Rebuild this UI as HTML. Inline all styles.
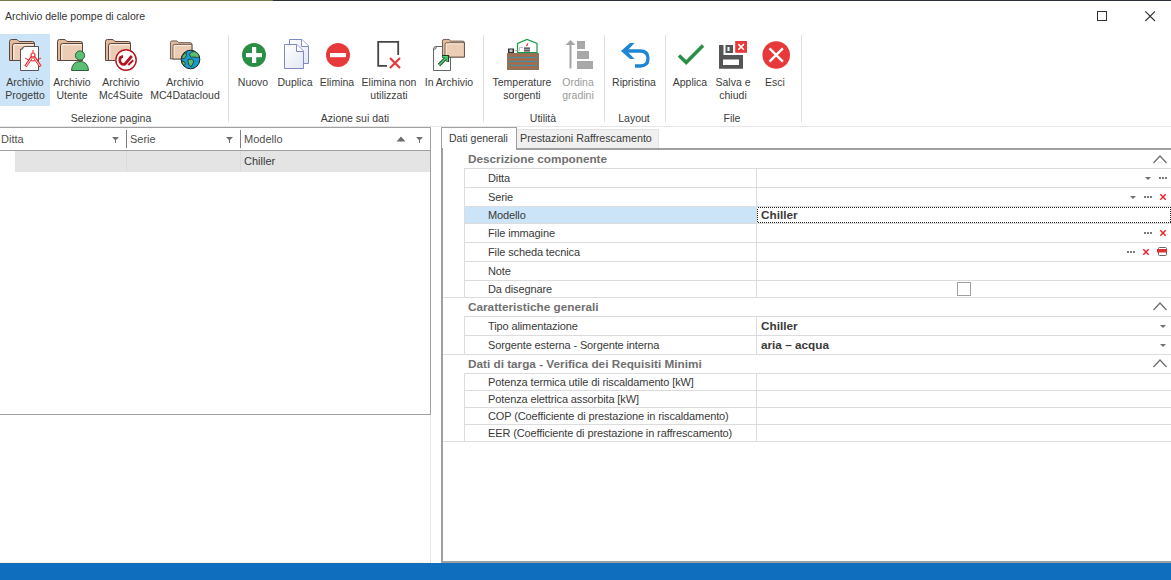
<!DOCTYPE html>
<html><head><meta charset="utf-8">
<style>
*{margin:0;padding:0;box-sizing:border-box}
html,body{width:1171px;height:580px;overflow:hidden;background:#fff;font-family:"Liberation Sans",sans-serif;color:#3a3a3a}
.a{position:absolute}
.t{position:absolute;white-space:nowrap;font-size:11px;line-height:13px}
.rl{position:absolute;white-space:nowrap;font-size:10.5px;line-height:13px;text-align:center;width:100px;color:#3c3c3c}
.hl{position:absolute;background:#dcdcdc;height:1px}
.vl{position:absolute;background:#dcdcdc;width:1px}
.pn{position:absolute;white-space:nowrap;font-size:11px;line-height:13px;left:488px;color:#3a3a3a;letter-spacing:-0.12px}
.cat{position:absolute;white-space:nowrap;font-size:11.75px;font-weight:bold;line-height:13px;left:468px;color:#707070}
.val{position:absolute;white-space:nowrap;font-size:11.75px;font-weight:bold;line-height:13px;left:761px;color:#3a3a3a}
svg{position:absolute;overflow:visible}
</style></head><body>
<!-- top edge -->
<div class="a" style="left:0;top:0;width:273px;height:1px;background:#6f7a48"></div><div class="a" style="left:273px;top:0;width:898px;height:1px;background:#2c303a"></div>
<!-- title -->
<div class="t" style="left:5px;top:10px;font-size:10.5px;color:#333">Archivio delle pompe di calore</div>
<div class="a" style="left:1097px;top:11px;width:10px;height:10px;border:1px solid #333"></div>
<svg style="left:1145px;top:11px" width="11" height="11" viewBox="0 0 11 11"><path d="M0.3 0.3L10 10M10 0.3L0.3 10" stroke="#333" stroke-width="1.1"/></svg>

<!-- RIBBON -->
<div class="a" style="left:0;top:34px;width:50px;height:72px;background:#cce4f7"></div>
<div class="a" style="left:228px;top:35px;width:1px;height:87px;background:#e0e0e0"></div>
<div class="a" style="left:483px;top:35px;width:1px;height:87px;background:#e0e0e0"></div>
<div class="a" style="left:604px;top:35px;width:1px;height:87px;background:#e0e0e0"></div>
<div class="a" style="left:665px;top:35px;width:1px;height:87px;background:#e0e0e0"></div>
<div class="a" style="left:801px;top:35px;width:1px;height:87px;background:#e0e0e0"></div>
<div class="a" style="left:0;top:126px;width:1171px;height:1px;background:#e6e6e6"></div>

<div id="icons">
<svg style="left:0;top:0" width="1171" height="126" viewBox="0 0 1171 126">
<defs>
<linearGradient id="dg" x1="0" y1="0" x2="1" y2="1"><stop offset="0" stop-color="#ffffff"/><stop offset="1" stop-color="#e3e8f3"/></linearGradient>
<g id="fold">
<path d="M0.5 2.5Q0.5 0.5 2.5 0.5H8L10 2.5H23.5Q25.5 2.5 25.5 4.5V21.5H0.5Z" fill="#e2bb9c" stroke="#5a4840" stroke-width="1"/>
<path d="M3.5 6.5Q3.5 4.5 5.5 4.5H25.5V21.5H3.5Z" fill="#ebcdb5" stroke="#5a4840" stroke-width="1"/>
<path d="M4.8 20.5V6.5Q4.8 5.8 5.5 5.8H24.5" fill="none" stroke="#fff3e8" stroke-width="1"/>
</g>
</defs>
<!-- Archivio Progetto -->
<use href="#fold" x="9" y="39"/>
<path d="M22.5 49Q22.5 46.5 25 46.5H38.5V70.5H20.5V49Z" fill="#fff" stroke="#555" stroke-width="1"/>
<path d="M20.5 49.5Q23 49.5 23 47" fill="#ddd" stroke="#555" stroke-width="1"/>
<g fill="none">
<path d="M33 50V53" stroke="#e8262c" stroke-width="1"/>
<path d="M25 58Q33 64 41 58" stroke="#e8262c" stroke-width="1"/>
<path d="M31.8 57L25.5 66.5M34.2 57L40.5 66.5" stroke="#e8262c" stroke-width="2.8"/>
<path d="M31.8 57.5L25.8 66.2M34.2 57.5L40.2 66.2" stroke="#fff" stroke-width="0.9"/>
<circle cx="33" cy="55" r="2" stroke="#e8262c" stroke-width="1.1" fill="#fff"/>
</g>
<!-- Archivio Utente -->
<use href="#fold" x="57" y="39"/>
<path d="M71.5 70.5Q72 61.5 80 61.5Q88 61.5 88.5 70.5Z" fill="#5cbf74" stroke="#2e5e3a" stroke-width="1"/>
<circle cx="80" cy="55.5" r="4.6" fill="#5cbf74" stroke="#2e5e3a" stroke-width="1"/>
<!-- Mc4Suite -->
<use href="#fold" x="105" y="39"/>
<circle cx="126" cy="60" r="10.6" fill="#fff" stroke="#fff" stroke-width="1"/>
<circle cx="126" cy="60" r="10.2" fill="#fff" stroke="#b5121b" stroke-width="1.4"/>
<path d="M123 56.3Q119.3 56.8 119.8 60.8Q120.8 65.3 124.8 64.2L131.8 56" fill="none" stroke="#b5121b" stroke-width="2.7"/>
<path d="M128.3 65L133.2 60.3" stroke="#b5121b" stroke-width="1.9"/>
<!-- MC4Datacloud -->
<use href="#fold" transform="translate(170,40.5) scale(0.86,0.86)"/>
<circle cx="190.5" cy="59.5" r="9.3" fill="#1a9bd0" stroke="#1e1e1e" stroke-width="1"/>
<path d="M189.5 54Q191 51 195 51.5Q199 53 199.5 57Q196.5 58 194 57Q191 58 190 56Z" fill="#5cbd6a" stroke="#1e1e1e" stroke-width="0.7"/>
<path d="M188 59.5Q192 58 194 61Q193 64 191 67Q188.5 65 188 62Z" fill="#5cbd6a" stroke="#1e1e1e" stroke-width="0.7"/>
<path d="M181.5 58Q183 53.5 186.5 52.5Q187 56 184 59Z" fill="#5cbd6a" stroke="#1e1e1e" stroke-width="0.7"/>
<path d="M181.5 61Q185 61 185.5 64Q184.5 66.5 182.5 64Z" fill="#5cbd6a" stroke="#1e1e1e" stroke-width="0.7"/>

<!-- Nuovo -->
<circle cx="254" cy="55" r="12" fill="#2b8e46"/>
<rect x="246" y="53" width="16" height="4.2" fill="#fff"/>
<rect x="252" y="47" width="4.2" height="16" fill="#fff"/>
<!-- Duplica -->
<path d="M289.5 39.5H302L308.5 46V63.5H289.5Z" fill="url(#dg)" stroke="#7d8bbf" stroke-width="1"/>
<path d="M301.5 39.5V46.5H308.5" fill="#fff" stroke="#7d8bbf" stroke-width="1"/>
<path d="M284.5 44.5H297L303.5 51V68.5H284.5Z" fill="url(#dg)" stroke="#7d8bbf" stroke-width="1"/>
<path d="M296.5 44.5V51.5H303.5" fill="#fff" stroke="#7d8bbf" stroke-width="1"/>
<!-- Elimina -->
<circle cx="338" cy="55" r="12" fill="#e8393a"/>
<rect x="330" y="53" width="16" height="4.2" fill="#fff"/>
<!-- Elimina non utilizzati -->
<path d="M387 65.8H378.2V41.8H398.2V55" fill="none" stroke="#454545" stroke-width="1.8"/>
<path d="M390 58L400 68M400 58L390 68" stroke="#e8393a" stroke-width="2.2"/>
<!-- In Archivio -->
<path d="M436 46.5H450.5V70.5H433.5V49Q433.5 46.5 436 46.5Z" fill="#fff" stroke="#666" stroke-width="1"/>
<path d="M433.5 49.5Q436.5 49.5 436.5 46.5" fill="#ddd" stroke="#666" stroke-width="1"/>
<use href="#fold" transform="translate(442,39) scale(0.88,0.84)"/>
<path d="M439 65L446.5 57.5" stroke="#1e3a22" stroke-width="3.2"/>
<path d="M442 56.3H447.7V62" fill="none" stroke="#1e3a22" stroke-width="2.8"/>
<path d="M439 65L446.5 57.5" stroke="#4cd67a" stroke-width="1.6"/>
<path d="M442.5 56.8H447.2V61.5" fill="none" stroke="#4cd67a" stroke-width="1.4"/>

<!-- Temperature sorgenti -->
<rect x="507" y="53" width="32" height="17" fill="#8b7457"/>
<g stroke-width="1">
<path d="M509 55.5H537M509 59.5H537M509 63.5H537M509 67.5H537" stroke="#b7634a"/>
<path d="M509 57.5H537M509 61.5H537M509 65.5H537" stroke="#4e8d9f"/>
</g>
<path d="M517.5 53V43.5L527 39.5L537 43.5V53" fill="#fff" stroke="#1a9a42" stroke-width="1.2"/>
<path d="M517.5 52.5H537" stroke="#1a9a42" stroke-width="1"/>
<rect x="524" y="47" width="6" height="5" fill="#999"/>
<path d="M524 48.5H530M524 50.5H530" stroke="#555" stroke-width="0.8"/>
<path d="M526.5 46L527.8 43.5" stroke="#e02020" stroke-width="1.2"/>
<rect x="508" y="48.5" width="6" height="4.5" fill="#333"/>
<rect x="509.5" y="49.5" width="3" height="2.5" fill="#ccc"/>
<path d="M514.5 50.5H519.5V47.5H523" stroke="#aaa" stroke-width="0.7" fill="none"/>
<!-- Ordina gradini -->
<path d="M570.5 68.5V44" stroke="#a5a5a5" stroke-width="2"/>
<path d="M565.5 45L570.5 40L575.5 45Z" fill="#a5a5a5"/>
<rect x="577" y="41" width="8" height="8" fill="#a8a8a8"/>
<rect x="577" y="51" width="12" height="8" fill="#a8a8a8"/>
<rect x="577" y="61" width="16" height="8" fill="#a8a8a8"/>

<!-- Ripristina -->
<path d="M625 51H640Q648 51 648 58.5Q648 66 640 66H635" fill="none" stroke="#1e86d4" stroke-width="3.3"/>
<path d="M621 51L630 43H634.5L627 51L634.5 59H630Z" fill="#1e86d4"/>
<!-- Applica -->
<path d="M679 55.5L686.2 62.6L703 45.5" fill="none" stroke="#2a8f46" stroke-width="3.5"/>
<!-- Salva e chiudi -->
<path d="M720.5 45V68H742V55.5H728V65.5" fill="none" stroke="#505050" stroke-width="0"/>
<path d="M719 45H723.5V55H743V68.8H719Z M723 59.5V65H739V59.5Z" fill="#555" fill-rule="evenodd"/>
<rect x="725.5" y="45" width="7.5" height="8" fill="#555"/>
<rect x="727.5" y="47" width="2" height="4" fill="#fff"/>
<rect x="735.2" y="41" width="11.8" height="11.8" fill="#e8393a"/>
<path d="M738.3 44.1L743.9 49.7M743.9 44.1L738.3 49.7" stroke="#fff" stroke-width="1.5"/>
<!-- Esci -->
<circle cx="776.2" cy="55" r="13.8" fill="#e8393a"/>
<path d="M769.5 48.3L782.9 61.7M782.9 48.3L769.5 61.7" stroke="#fff" stroke-width="2.4"/>
</svg>

</div>

<!-- ribbon labels -->
<div class="rl" style="left:-25px;top:76px">Archivio<br>Progetto</div>
<div class="rl" style="left:22px;top:76px">Archivio<br>Utente</div>
<div class="rl" style="left:71px;top:76px">Archivio<br>Mc4Suite</div>
<div class="rl" style="left:135px;top:76px">Archivio<br>MC4Datacloud</div>
<div class="rl" style="left:61px;top:112px">Selezione pagina</div>
<div class="rl" style="left:203px;top:76px">Nuovo</div>
<div class="rl" style="left:245px;top:76px">Duplica</div>
<div class="rl" style="left:287px;top:76px">Elimina</div>
<div class="rl" style="left:339px;top:76px">Elimina non<br>utilizzati</div>
<div class="rl" style="left:399px;top:76px">In Archivio</div>
<div class="rl" style="left:305px;top:112px">Azione sui dati</div>
<div class="rl" style="left:472px;top:76px">Temperature<br>sorgenti</div>
<div class="rl" style="left:528px;top:76px;color:#9a9a9a">Ordina<br>gradini</div>
<div class="rl" style="left:493px;top:112px">Utilità</div>
<div class="rl" style="left:584px;top:76px">Ripristina</div>
<div class="rl" style="left:584px;top:112px">Layout</div>
<div class="rl" style="left:640px;top:76px">Applica</div>
<div class="rl" style="left:683px;top:76px">Salva e<br>chiudi</div>
<div class="rl" style="left:725px;top:76px">Esci</div>
<div class="rl" style="left:682px;top:112px">File</div>

<!-- LEFT GRID -->
<div class="a" style="left:0;top:127px;width:431px;height:288px;border-top:1px solid #a0a0a0;border-right:1px solid #a0a0a0;border-bottom:1px solid #a0a0a0"></div>
<div class="a" style="left:0;top:150px;width:430px;height:1px;background:#a0a0a0"></div>
<div class="a" style="left:430px;top:415px;width:1px;height:148px;background:#e6e6e6"></div>
<div class="t" style="left:1px;top:133px;color:#505050">Ditta</div>
<div class="t" style="left:130px;top:133px;color:#505050">Serie</div>
<div class="t" style="left:244px;top:133px;color:#505050">Modello</div>
<div class="a" style="left:126px;top:130px;width:1px;height:18px;background:#808080"></div>
<div class="a" style="left:240px;top:130px;width:1px;height:18px;background:#808080"></div>
<div class="a" style="left:15px;top:151px;width:415px;height:21px;background:#e4e4e4"></div>
<div class="a" style="left:126px;top:151px;width:1px;height:21px;background:#dadada"></div>
<div class="a" style="left:240px;top:151px;width:1px;height:21px;background:#dadada"></div>
<div class="t" style="left:244px;top:155px;color:#3a3a3a">Chiller</div>
<div id="gridicons">
<svg style="left:0;top:0" width="1171" height="460" viewBox="0 0 1171 460">
<!-- filters -->
<g fill="#6e6e6e">
<path d="M112 137H119L116 140V143H115V140Z"/>
<path d="M226 137H233L230 140V143H229V140Z"/>
<path d="M416 137H423L420 140V143H419V140Z"/>
<path d="M396.5 141.5L401 136.5L405.5 141.5Z"/>
</g>
<!-- prop icons -->
<g fill="#707070">
<path d="M1145 177H1151L1148 180Z"/>
<path d="M1130 196H1136L1133 199Z"/>
<path d="M1160 325H1166L1163 328Z"/>
<path d="M1160 344H1166L1163 347Z"/>
</g>
<g fill="#7a7a7a">
<rect x="1159" y="177" width="2" height="2"/><rect x="1162" y="177" width="2" height="2"/><rect x="1165" y="177" width="2" height="2"/>
<rect x="1144" y="196" width="2" height="2"/><rect x="1147" y="196" width="2" height="2"/><rect x="1150" y="196" width="2" height="2"/>
<rect x="1144" y="232" width="2" height="2"/><rect x="1147" y="232" width="2" height="2"/><rect x="1150" y="232" width="2" height="2"/>
<rect x="1127" y="251" width="2" height="2"/><rect x="1130" y="251" width="2" height="2"/><rect x="1133" y="251" width="2" height="2"/>
</g>
<g stroke="#e8262c" stroke-width="1.5">
<path d="M1160.3 194.3L1165.7 199.7M1165.7 194.3L1160.3 199.7"/>
<path d="M1160.3 230.3L1165.7 235.7M1165.7 230.3L1160.3 235.7"/>
<path d="M1143.3 249.3L1148.7 254.7M1148.7 249.3L1143.3 254.7"/>
</g>
<rect x="1158.5" y="247.5" width="8" height="8" rx="1" fill="#fff" stroke="#666"/>
<rect x="1157" y="249" width="10" height="3.5" fill="#e03030"/>
<!-- checkbox -->
<rect x="957.5" y="282.5" width="13" height="13" fill="#fff" stroke="#a0a0a0"/>
<!-- focus rect -->
<rect x="757.5" y="207.5" width="413" height="15" fill="none" stroke="#222" stroke-dasharray="1 1" shape-rendering="crispEdges"/>
</svg>
<div class="val" style="top:208px">Chiller</div>
<div class="val" style="top:319px">Chiller</div>
<div class="val" style="top:338px">aria – acqua</div>

</div>

<!-- TABS -->
<div class="a" style="left:441px;top:127px;width:76px;height:23px;border:1px solid #a0a0a0;border-bottom:none;background:#fff"></div>
<div class="a" style="left:517px;top:129px;width:142px;height:19px;background:#f0f0f0;border:1px solid #e3e3e3;border-left:none;border-bottom:none"></div>
<div class="t" style="left:449px;top:132px;font-size:10.5px">Dati generali</div>
<div class="t" style="left:520px;top:132px;font-size:10.75px">Prestazioni Raffrescamento</div>
<!-- content box -->
<div class="a" style="left:441px;top:148px;width:730px;height:415px;border-left:2px solid #a0a0a0;border-top:2px solid #a0a0a0;border-bottom:2px solid #a0a0a0"></div>
<div class="a" style="left:443px;top:148px;width:73px;height:2px;background:#fff"></div>

<div id="prop">
<div class="cat" style="top:152px">Descrizione componente</div>
<svg style="left:1153px;top:154.5px" width="14" height="9" viewBox="0 0 14 9"><path d="M0.5 8L7 1L13.5 8" fill="none" stroke="#707070" stroke-width="1.3"/></svg>
<div class="hl" style="left:464px;top:168px;width:707px"></div>
<div class="vl" style="left:464px;top:168px;height:19px"></div>
<div class="vl" style="left:756px;top:168px;height:19px"></div>
<div class="pn" style="top:172px">Ditta</div>
<div class="hl" style="left:464px;top:187px;width:707px"></div>
<div class="vl" style="left:464px;top:187px;height:19px"></div>
<div class="vl" style="left:756px;top:187px;height:19px"></div>
<div class="pn" style="top:191px">Serie</div>
<div class="hl" style="left:464px;top:206px;width:707px"></div>
<div class="vl" style="left:464px;top:206px;height:17px"></div>
<div class="vl" style="left:756px;top:206px;height:17px"></div>
<div class="a" style="left:465px;top:207px;width:291px;height:16px;background:#cce4f7"></div>
<div class="pn" style="top:209px">Modello</div>
<div class="hl" style="left:464px;top:223px;width:707px"></div>
<div class="vl" style="left:464px;top:223px;height:19px"></div>
<div class="vl" style="left:756px;top:223px;height:19px"></div>
<div class="pn" style="top:227px">File immagine</div>
<div class="hl" style="left:464px;top:242px;width:707px"></div>
<div class="vl" style="left:464px;top:242px;height:19px"></div>
<div class="vl" style="left:756px;top:242px;height:19px"></div>
<div class="pn" style="top:246px">File scheda tecnica</div>
<div class="hl" style="left:464px;top:261px;width:707px"></div>
<div class="vl" style="left:464px;top:261px;height:19px"></div>
<div class="vl" style="left:756px;top:261px;height:19px"></div>
<div class="pn" style="top:265px">Note</div>
<div class="hl" style="left:464px;top:280px;width:707px"></div>
<div class="vl" style="left:464px;top:280px;height:17px"></div>
<div class="vl" style="left:756px;top:280px;height:17px"></div>
<div class="pn" style="top:283px">Da disegnare</div>
<div class="hl" style="left:443px;top:297px;width:728px"></div>
<div class="cat" style="top:300px">Caratteristiche generali</div>
<svg style="left:1153px;top:302.0px" width="14" height="9" viewBox="0 0 14 9"><path d="M0.5 8L7 1L13.5 8" fill="none" stroke="#707070" stroke-width="1.3"/></svg>
<div class="hl" style="left:464px;top:316px;width:707px"></div>
<div class="vl" style="left:464px;top:316px;height:19px"></div>
<div class="vl" style="left:756px;top:316px;height:19px"></div>
<div class="pn" style="top:320px">Tipo alimentazione</div>
<div class="hl" style="left:464px;top:335px;width:707px"></div>
<div class="vl" style="left:464px;top:335px;height:19px"></div>
<div class="vl" style="left:756px;top:335px;height:19px"></div>
<div class="pn" style="top:339px">Sorgente esterna - Sorgente interna</div>
<div class="hl" style="left:443px;top:354px;width:728px"></div>
<div class="cat" style="top:357px">Dati di targa - Verifica dei Requisiti Minimi</div>
<svg style="left:1153px;top:359.0px" width="14" height="9" viewBox="0 0 14 9"><path d="M0.5 8L7 1L13.5 8" fill="none" stroke="#707070" stroke-width="1.3"/></svg>
<div class="hl" style="left:464px;top:373px;width:707px"></div>
<div class="vl" style="left:464px;top:373px;height:17px"></div>
<div class="vl" style="left:756px;top:373px;height:17px"></div>
<div class="pn" style="top:376px">Potenza termica utile di riscaldamento [kW]</div>
<div class="hl" style="left:464px;top:390px;width:707px"></div>
<div class="vl" style="left:464px;top:390px;height:17px"></div>
<div class="vl" style="left:756px;top:390px;height:17px"></div>
<div class="pn" style="top:393px">Potenza elettrica assorbita [kW]</div>
<div class="hl" style="left:464px;top:407px;width:707px"></div>
<div class="vl" style="left:464px;top:407px;height:17px"></div>
<div class="vl" style="left:756px;top:407px;height:17px"></div>
<div class="pn" style="top:410px">COP (Coefficiente di prestazione in riscaldamento)</div>
<div class="hl" style="left:464px;top:424px;width:707px"></div>
<div class="vl" style="left:464px;top:424px;height:17px"></div>
<div class="vl" style="left:756px;top:424px;height:17px"></div>
<div class="pn" style="top:427px">EER (Coefficiente di prestazione in raffrescamento)</div>
<div class="hl" style="left:443px;top:441px;width:728px"></div>

</div>

<!-- status bar -->
<div class="a" style="left:0;top:562px;width:430px;height:1px;background:#fbf4ee"></div>
<div class="a" style="left:0;top:563px;width:1171px;height:17px;background:#106ebe"></div>
</body></html>
